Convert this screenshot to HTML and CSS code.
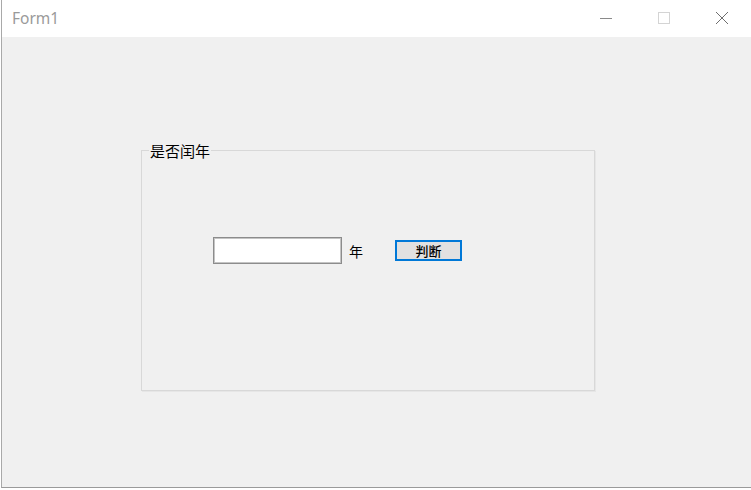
FILE: index.html
```html
<!DOCTYPE html>
<html lang="zh">
<head>
<meta charset="utf-8">
<title>Form1</title>
<link rel="stylesheet" href="styles.css">
</head>
<body>
<div class="window">
  <div class="titlebar">
    <span class="title">Form1</span>
    <div class="controls">
      <span class="ctl">
        <svg width="14" height="14" viewBox="0 0 14 14"><line x1="1" y1="7.5" x2="13" y2="7.5" stroke="#8a8a8a" stroke-width="1"/></svg>
      </span>
      <span class="ctl">
        <svg width="14" height="14" viewBox="0 0 14 14"><rect x="1.5" y="1.5" width="11" height="11" fill="none" stroke="#d4d4d4" stroke-width="1"/></svg>
      </span>
      <span class="ctl">
        <svg width="14" height="14" viewBox="0 0 14 14"><path d="M1 1 L13 13 M13 1 L1 13" stroke="#6e6e6e" stroke-width="1"/></svg>
      </span>
    </div>
  </div>
  <div class="client">
    <fieldset class="group">
      <legend class="legend">是否闰年</legend>
      <div class="row">
        <input class="textbox" type="text">
        <span class="unit">年</span>
        <button class="btn">判断</button>
      </div>
    </fieldset>
  </div>
</div>
</body>
</html>
```

FILE: styles.css
```css
html, body {
  margin: 0;
  padding: 0;
  width: 751px;
  height: 490px;
  overflow: hidden;
  background: #ffffff;
  font-family: "Noto Sans", "Noto Sans CJK SC", sans-serif;
}

.window {
  margin-left: 1px;
  width: 750px;
  height: 488px;
  border-left: 1px solid #a9a9a9;
  border-bottom: 1px solid #9a9a9a;
  box-sizing: border-box;
  display: flex;
  flex-direction: column;
  background: #f0f0f0;
}

.titlebar {
  height: 37px;
  flex: none;
  background: #ffffff;
  display: flex;
  align-items: center;
  justify-content: space-between;
}

.title {
  margin-left: 10px;
  margin-top: -1px;
  font-size: 15.5px;
  color: #9a9a9a;
  font-family: "Noto Sans", "Open Sans", sans-serif;
}

.controls {
  display: flex;
  height: 100%;
}

.ctl {
  width: 58px;
  display: flex;
  align-items: center;
  justify-content: center;
  margin-top: -1px;
}

.client {
  flex: 1;
  background: #f0f0f0;
  padding-top: 105px;
  padding-left: 139px;
}

.group {
  margin: 0;
  width: 454px;
  height: 249px;
  box-sizing: border-box;
  border: 1px solid #d8d8d8;
  box-shadow: 1px 1px 0 #e6e6e6;
  padding: 0;
}

.legend {
  margin-left: 7px;
  padding: 0 1px;
  font-size: 15px;
  line-height: 17px;
  color: #000;
  font-family: "Noto Sans CJK SC", sans-serif;
}

.row {
  display: flex;
  align-items: center;
  margin-top: 78px;
  margin-left: 71px;
}

.textbox {
  width: 129px;
  height: 27px;
  box-sizing: border-box;
  border: 1px solid #8c8c8c;
  box-shadow: inset 0 0 0 1px #c4c4c4;
  background: #fff;
  margin: 0;
  padding: 0;
  outline: none;
}

.unit {
  margin-left: 7px;
  font-size: 14px;
  font-family: "Noto Sans CJK SC", sans-serif;
  color: #000;
}

.btn {
  margin-left: 32px;
  width: 67px;
  height: 21px;
  box-sizing: border-box;
  border: 2px solid #0078d7;
  background: #e1e1e1;
  padding: 0;
  font-size: 13px;
  line-height: 15px;
  font-weight: 500;
  font-family: "Noto Sans CJK SC", sans-serif;
  color: #000;
}
```
